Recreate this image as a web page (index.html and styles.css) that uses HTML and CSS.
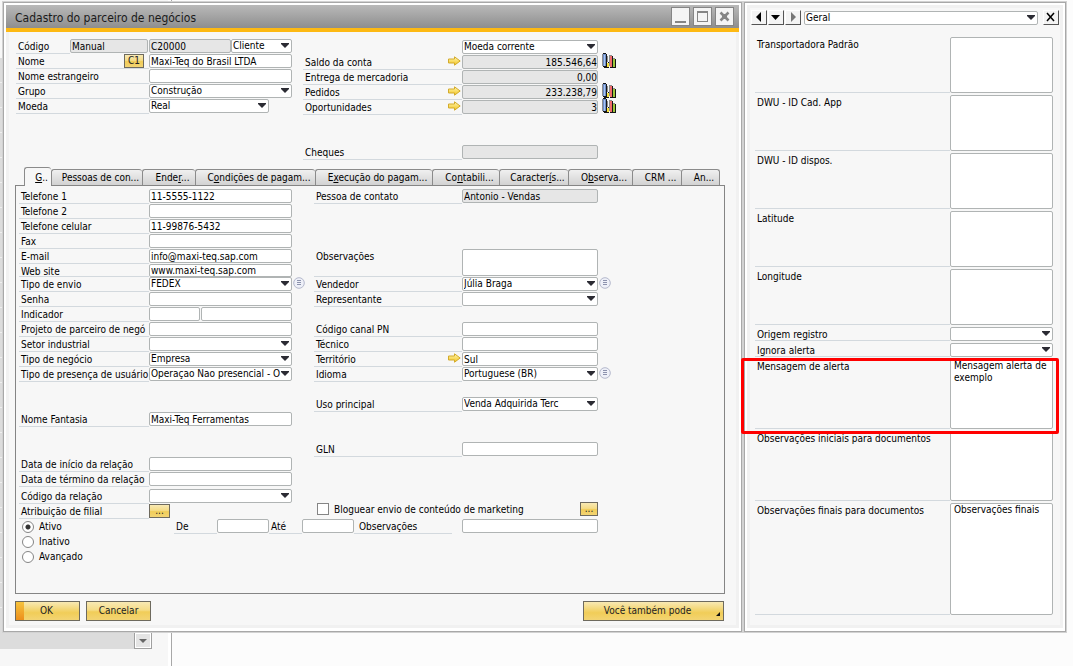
FILE: index.html
```html
<!DOCTYPE html>
<html lang="pt-BR">
<head>
    <meta charset="UTF-8">
    <meta name="viewport" content="width=device-width, initial-scale=1.0">
    <title>Cadastro do parceiro de negócios</title>
    <link rel="stylesheet" href="styles.css">
</head>
<body>

    <!-- Ícones reutilizados -->
    <svg class="sprites" width="0" height="0" aria-hidden="true">
        <defs>
            <linearGradient id="gold" x1="0" y1="0" x2="0" y2="1">
                <stop offset="0" stop-color="#fff6b0"/>
                <stop offset="1" stop-color="#f2c420"/>
            </linearGradient>
            <symbol id="arrow" viewBox="0 0 13 10">
                <path d="M.5 3h6V.8L12.2 5 6.5 9.2V7h-6z" fill="url(#gold)" stroke="#d3ab2c"/>
            </symbol>
            <symbol id="chart" viewBox="0 0 14 15">
                <path d="M0 1h1v12H0zM5 3h1v6H5zM7 2h3v1H7zM7 3h1v10H7zM11 5h2v1h-2z" fill="#8c8c8c"/>
                <path d="M1 0h3v1h1v14H2v-1H1zM6 9h1v6H5v-5h1zM10 3h1v12H8v-1h2zM13 6h1v9h-3v-1h2z" fill="#151515"/>
                <path d="M1 1h3v12H1z" fill="#6f8fc8"/>
                <path d="M2 2h1v11H2z" fill="#a9c4f2"/>
                <path d="M5 10h2v4H5z" fill="#f6e23c"/>
                <path d="M8 3h2v11H8z" fill="#f26d6d"/>
                <path d="M11 6h2v8h-2z" fill="#9cc83c"/>
            </symbol>
            <symbol id="list" viewBox="0 0 12 12">
                <circle cx="6" cy="6" r="5.3" fill="#eef0f8" stroke="#b4b8cc"/>
                <path d="M4 3h4v1H4zM4 5h4v1H4zM4 7h4v1H4z" fill="#8c92ad"/>
            </symbol>
        </defs>
    </svg>

    <div class="back-window">
        <div class="back-grid"></div>
        <div class="back-footer"><button type="button" class="back-drop" aria-label="Abrir lista"></button></div>
    </div>

    <div class="desktop">
        <main class="window main-window">
            <header class="titlebar">
                <h1>Cadastro do parceiro de negócios</h1>
                <button type="button" aria-label="Minimizar"><svg width="15" height="15" viewBox="0 0 15 15"><path d="M2 12h11v2H2z" fill="#858585"/></svg></button>
                <button type="button" aria-label="Maximizar"><svg width="15" height="15" viewBox="0 0 15 15"><path d="M2 2h11v11H2zM3 4v8h9V4z" fill="#858585" fill-rule="evenodd"/></svg></button>
                <button type="button" aria-label="Fechar"><svg width="15" height="15" viewBox="0 0 15 15"><path d="M3.500 3.500l8 8M11.500 3.500l-8 8" stroke="#858585" stroke-width="2.500"/><path d="M5 5h5v5H5z" fill="#858585"/></svg></button>
            </header>

            <form class="content">
                <div class="header">
                    <div class="header-left">
                        <div class="field">
                            <label class="short" for="codigo">Código</label>
                            <input class="serie" type="text" value="Manual" aria-label="Série" readonly>
                            <input class="code" id="codigo" type="text" value="C20000" readonly>
                            <select class="kind" aria-label="Tipo"><option>Cliente</option></select>
                        </div>
                        <div class="field">
                            <label for="nome">Nome</label>
                            <button type="button" class="gold c1">C1</button>
                            <input id="nome" type="text" value="Maxi-Teq do Brasil LTDA">
                        </div>
                        <div class="field"><label for="estrangeiro">Nome estrangeiro</label><input id="estrangeiro" type="text"></div>
                        <div class="field"><label for="grupo">Grupo</label><select id="grupo"><option>Construção</option></select></div>
                        <div class="field"><label for="moeda">Moeda</label><select class="currency" id="moeda"><option>Real</option></select></div>
                    </div>

                    <div class="header-right">
                        <div class="field"><span class="no-label"></span><select aria-label="Moeda de exibição"><option>Moeda corrente</option></select></div>
                        <div class="field">
                            <label for="saldo">Saldo da conta<svg class="arrow"><use href="#arrow"/></svg></label>
                            <input id="saldo" type="text" value="185.546,64" readonly>
                            <svg class="chart"><use href="#chart"/></svg>
                        </div>
                        <div class="field"><label for="entrega">Entrega de mercadoria</label><input id="entrega" type="text" value="0,00" readonly></div>
                        <div class="field">
                            <label for="pedidos">Pedidos<svg class="arrow"><use href="#arrow"/></svg></label>
                            <input id="pedidos" type="text" value="233.238,79" readonly>
                            <svg class="chart"><use href="#chart"/></svg>
                        </div>
                        <div class="field">
                            <label for="oport">Oportunidades<svg class="arrow"><use href="#arrow"/></svg></label>
                            <input id="oport" type="text" value="3" readonly>
                            <svg class="chart"><use href="#chart"/></svg>
                        </div>
                        <div class="field space-2"><label for="cheques">Cheques</label><input id="cheques" type="text" readonly></div>
                    </div>
                </div>

                <nav class="tabs">
                    <button type="button" class="tab-1 active"><u>G</u>..</button>
                    <button type="button" class="tab-2">Pessoas de con...</button>
                    <button type="button" class="tab-3">Ende<u>r</u>...</button>
                    <button type="button" class="tab-4">C<u>o</u>ndições de pagam...</button>
                    <button type="button" class="tab-5">E<u>x</u>ecução do pagam...</button>
                    <button type="button" class="tab-6">Co<u>n</u>tabili...</button>
                    <button type="button" class="tab-7">Caracter<u>í</u>s...</button>
                    <button type="button" class="tab-8">O<u>b</u>serva...</button>
                    <button type="button" class="tab-9">CRM ...</button>
                    <button type="button" class="tab-10">An...</button>
                </nav>

                <section class="panel">
                    <div class="columns">
                        <div class="col-left">
                            <div class="field"><label for="tel1">Telefone 1</label><input id="tel1" type="text" value="11-5555-1122"></div>
                            <div class="field"><label for="tel2">Telefone 2</label><input id="tel2" type="text"></div>
                            <div class="field"><label for="cel">Telefone celular</label><input id="cel" type="text" value="11-99876-5432"></div>
                            <div class="field"><label for="fax">Fax</label><input id="fax" type="text"></div>
                            <div class="field"><label for="email">E-mail</label><input id="email" type="text" value="info@maxi-teq.sap.com"></div>
                            <div class="field low"><label for="site">Web site</label><input id="site" type="text" value="www.maxi-teq.sap.com"></div>
                            <div class="field">
                                <label for="envio">Tipo de envio</label><select id="envio"><option>FEDEX</option></select>
                                <svg class="list"><use href="#list"/></svg>
                            </div>
                            <div class="field"><label for="senha">Senha</label><input id="senha" type="text"></div>
                            <div class="field">
                                <label for="indicador">Indicador</label>
                                <input class="ind-code" id="indicador" type="text">
                                <input class="ind-name" type="text" aria-label="Nome do indicador">
                            </div>
                            <div class="field"><label for="projeto">Projeto de parceiro de negó</label><input id="projeto" type="text"></div>
                            <div class="field"><label for="setor">Setor industrial</label><select id="setor"><option></option></select></div>
                            <div class="field"><label for="negocio">Tipo de negócio</label><select id="negocio"><option>Empresa</option></select></div>
                            <div class="field"><label for="presenca">Tipo de presença de usuário</label><select id="presenca"><option>Operaçao Nao presencial - O</option></select></div>
                            <div class="field space-2"><label for="fantasia">Nome Fantasia</label><input id="fantasia" type="text" value="Maxi-Teq Ferramentas"></div>
                            <div class="field space-2"><label for="inicio">Data de início da relação</label><input id="inicio" type="text"></div>
                            <div class="field"><label for="termino">Data de término da relação</label><input id="termino" type="text"></div>
                            <div class="field tall"><label for="relacao">Código da relação</label><select id="relacao"><option></option></select></div>
                            <div class="field"><label for="filial">Atribuição de filial</label><button type="button" class="gold dots" id="filial">...</button></div>
                        </div>

                        <div class="col-right">
                            <div class="field"><label for="contato">Pessoa de contato</label><input id="contato" type="text" value="Antonio - Vendas" readonly></div>
                            <div class="field space-3 double"><label for="obs">Observações</label><textarea id="obs"></textarea></div>
                            <div class="field">
                                <label for="vendedor">Vendedor</label><select id="vendedor"><option>Júlia Braga</option></select>
                                <svg class="list"><use href="#list"/></svg>
                            </div>
                            <div class="field"><label for="repr">Representante</label><select id="repr"><option></option></select></div>
                            <div class="field space-1"><label for="canal">Código canal PN</label><input id="canal" type="text"></div>
                            <div class="field"><label for="tecnico">Técnico</label><input id="tecnico" type="text"></div>
                            <div class="field">
                                <label for="territorio">Território<svg class="arrow"><use href="#arrow"/></svg></label>
                                <input id="territorio" type="text" value="Sul">
                            </div>
                            <div class="field">
                                <label for="idioma">Idioma</label><select id="idioma"><option>Portuguese (BR)</option></select>
                                <svg class="list"><use href="#list"/></svg>
                            </div>
                            <div class="field space-1"><label for="uso">Uso principal</label><select id="uso"><option>Venda Adquirida Terc</option></select></div>
                            <div class="field space-2"><label for="gln">GLN</label><input id="gln" type="text"></div>
                            <div class="field space-3 marketing">
                                <input type="checkbox" id="bloquear"><label for="bloquear">Bloguear envio de conteúdo de marketing</label>
                                <button type="button" class="gold" aria-label="Opções de marketing">...</button>
                            </div>
                        </div>
                    </div>

                    <div class="status">
                        <div class="radios">
                            <label><input type="radio" name="status" checked>Ativo</label>
                            <label><input type="radio" name="status">Inativo</label>
                            <label><input type="radio" name="status">Avançado</label>
                        </div>
                        <div class="field period">
                            <label class="de" for="de">De</label><input class="date" id="de" type="text">
                            <label class="ate" for="ate">Até</label><input class="date" id="ate" type="text">
                            <label class="notes" for="notas">Observações</label><input class="notes-input" id="notas" type="text">
                        </div>
                    </div>
                </section>

                <footer class="actions">
                    <button type="button" class="gold ok">OK</button>
                    <button type="button" class="gold">Cancelar</button>
                    <button type="button" class="gold more">Você também pode</button>
                </footer>
            </form>
        </main>

        <aside class="window side-window">
            <div class="side-content">
                <div class="toolbar">
                    <button type="button" aria-label="Anterior"><svg width="13" height="12"><path d="M9 1v10L4 6z"/></svg></button>
                    <button type="button" aria-label="Lista"><svg width="13" height="12"><path d="M2 4h9L6.500 9z"/></svg></button>
                    <button type="button" aria-label="Próximo" disabled><svg width="13" height="12"><path d="M5 1v10l5-5z"/></svg></button>
                    <select aria-label="Categoria"><option>Geral</option></select>
                    <button type="button" aria-label="Fechar painel"><svg width="13" height="12"><path d="M3 2l7 8M10 2l-7 8" stroke="#000" stroke-width="1.500"/></svg></button>
                </div>

                <div class="udf"><label for="transp">Transportadora Padrão</label><textarea id="transp"></textarea></div>
                <div class="udf"><label for="cad">DWU - ID Cad. App</label><textarea id="cad"></textarea></div>
                <div class="udf"><label for="dispos">DWU - ID dispos.</label><textarea id="dispos"></textarea></div>
                <div class="udf"><label for="lat">Latitude</label><textarea id="lat"></textarea></div>
                <div class="udf"><label for="lon">Longitude</label><textarea id="lon"></textarea></div>
                <div class="udf line"><label for="origem">Origem registro</label><select id="origem"><option></option></select></div>
                <div class="udf line"><label for="ignora">Ignora alerta</label><select id="ignora"><option></option></select></div>
                <div class="udf medium marked"><label for="msg">Mensagem de alerta</label><textarea id="msg">Mensagem alerta de exemplo</textarea></div>
                <div class="udf medium"><label for="iniciais">Observações iniciais para documentos</label><textarea id="iniciais"></textarea></div>
                <div class="udf large"><label for="finais">Observações finais para documentos</label><textarea id="finais">Observações finais</textarea></div>
            </div>
        </aside>
    </div>

</body>
</html>
```
FILE: styles.css
```css
* {
    box-sizing: border-box;
}

body {
    margin: 0;
    min-height: 100vh;
    position: relative;
    overflow: hidden;
    background-color: #fcfcfc;
    color: #000;
    font-family: "DejaVu Sans Condensed", "Liberation Sans", sans-serif;
    font-size: 10px;
    line-height: 14px;
}

.sprites {
    position: absolute;
}

/* Janela que fica atrás */
.back-window {
    position: absolute;
    top: 0;
    bottom: 0;
    left: 0;
    width: 172px;
    display: flex;
    flex-direction: column;
    padding-bottom: 17px;
    background-color: #f7f7f7;
    border-right: 1px solid #a8a8a8;
    box-shadow: inset -3px 0 #fff;
}

.back-grid {
    flex: 1;
    width: 134px;
    margin-top: 58px;
    background: repeating-linear-gradient(#dcdcdc 0 24px, #efefef 24px 25px);
}

.back-footer {
    width: 152px;
    height: 17px;
    display: flex;
    justify-content: flex-end;
    background-color: #dcdcdc;
}

.back-drop {
    width: 18px;
    padding: 0;
    border: 1px solid #a0a0a0;
    background: #e4e4e4 url("data:image/svg+xml,%3Csvg xmlns='http://www.w3.org/2000/svg' width='8' height='4'%3E%3Cpath d='M0 0h8L4 4z' fill='%23666'/%3E%3C/svg%3E") no-repeat center;
    box-shadow: inset 0 0 0 1px #fff;
}

/* Janelas */
.desktop {
    position: relative;
    display: flex;
    align-items: stretch;
    gap: 2px;
    padding: 2px 7px 0 3px;
}

.window {
    padding: 2px 2px 3px;
    background-color: #fff;
    border: 1px solid #a8a8a8;
    box-shadow: 0 0 0 1px #d2d2d2;
}

.main-window {
    flex: 1;
}

.titlebar {
    display: flex;
    align-items: center;
    gap: 3px;
    height: 27px;
    padding: 0 5px 0 9px;
    background: linear-gradient(#b9b9b9, #8e8e8e);
    border-bottom: 4px solid #fdb913;
}

.titlebar h1 {
    flex: 1;
    margin: 0;
    font-size: 12px;
    line-height: 18px;
    padding-top: 3px;
    font-weight: normal;
    color: #1a1a1a;
}

.titlebar button {
    display: flex;
    width: 19px;
    height: 19px;
    padding: 1px;
    border: 1px solid #858585;
    background-color: #f4f4f4;
}

.content {
    padding: 7px 11px 4px 6px;
    background-color: #f7f7f7;
    border: solid #f1f1f1;
    border-width: 0 3px 3px;
}

/* Campos */
input,
select,
textarea {
    margin: 0;
    font: inherit;
    line-height: 12px;
    color: #000;
    background-color: #fff;
    border: 1px solid #b0b4b4;
    border-radius: 2px;
}

input[type="text"],
select {
    width: 143px;
    height: 14px;
    padding: 0 1px;
}

input[readonly] {
    background-color: #e6e6e6;
}

select {
    appearance: none;
    background: #fff url("data:image/svg+xml,%3Csvg xmlns='http://www.w3.org/2000/svg' width='8' height='5'%3E%3Cpath d='M0 0h8v1L4 5 0 1z' fill='%232b2b33'/%3E%3C/svg%3E") no-repeat right 2px top 3px;
}

textarea {
    display: block;
    padding: 0 3px;
    resize: none;
    overflow: hidden;
}

button {
    font: inherit;
    color: #222;
}

.field {
    display: flex;
    align-items: flex-start;
    height: 15px;
}

.field label,
.no-label {
    flex: none;
    position: relative;
    width: 130px;
    height: 15px;
    padding: 1px 0 0 2px;
    white-space: nowrap;
    border-bottom: 1px solid #d3d9de;
}

.field .no-label {
    border-bottom: 0;
}

.field.low,
.field.low label,
.field.low input {
    height: 13px;
}

.field.tall {
    height: 17px;
    padding-top: 2px;
}

.space-1 {
    margin-top: 15px;
}

.space-2 {
    margin-top: 30px;
}

.space-3 {
    margin-top: 45px;
}

.arrow {
    position: absolute;
    right: 1px;
    top: 1px;
    width: 13px;
    height: 10px;
}

.chart {
    flex: none;
    width: 14px;
    height: 15px;
    margin: -2px 0 0 4px;
}

.list {
    flex: none;
    width: 12px;
    height: 12px;
    margin-left: 1px;
}

/* Botões amarelos */
.gold {
    padding: 0;
    border: 1px solid #6e6a5e;
    background: linear-gradient(#f8e9b4 0%, #f5dc86 45%, #f1cd58 55%, #f3d473 100%);
}

.header {
    display: flex;
    gap: 11px;
    padding: 0 1px;
}

.header-left {
    width: 276px;
}

.header-left .field label {
    width: 133px;
}

.header-left .field .short {
    width: 54px;
}

.header-left .serie {
    width: 78px;
    margin-right: 1px;
}

.header-left .code {
    width: 82px;
}

.header-left .kind {
    width: 61px;
}

.header-left .currency {
    width: 120px;
}

.header-left .c1 {
    position: relative;
    width: 20px;
    height: 14px;
    margin: 0 5px 0 -25px;
    line-height: 12px;
}

.header-right {
    padding-top: 1px;
}

.header-right .field label,
.header-right .no-label {
    width: 159px;
}

.header-right input,
.header-right select {
    width: 136px;
}

.header-right input {
    padding: 0;
    text-align: right;
}

/* Abas */
.tabs {
    display: flex;
    align-items: flex-end;
    height: 18px;
    margin-top: 7px;
    padding-left: 9px;
}

.tabs button {
    height: 16px;
    padding: 0 0 0 7px;
    border: 1px solid #8b8b8b;
    border-width: 1px 0 0 1px;
    border-radius: 3px 3px 0 0;
    background: linear-gradient(#f0f0f0, #d2d2d2);
    color: #000;
    text-align: center;
    white-space: nowrap;
}

.tabs button:last-child {
    border-right-width: 1px;
}

.tabs .active {
    position: relative;
    height: 19px;
    margin-bottom: -1px;
    padding-top: 2px;
    background: #f7f7f7;
}

.tab-1 { width: 27px; }
.tab-2 { width: 91px; }
.tab-3 { width: 53px; }
.tab-4 { width: 120px; }
.tab-5 { width: 117px; }
.tab-6 { width: 67px; }
.tab-7 { width: 69px; }
.tab-8 { width: 64px; }
.tab-9 { width: 49px; }
.tab-10 { width: 39px; }

.panel {
    padding: 3px 3px 29px;
    border: 1px solid #858585;
}

.columns {
    display: flex;
}

.col-left {
    width: 295px;
}

.col-left .ind-code {
    width: 51px;
    margin-right: 1px;
}

.col-left .ind-name {
    width: 91px;
}

.dots {
    width: 21px;
    height: 14px;
    line-height: 8px;
}

.col-right label {
    width: 148px;
}

.col-right input[type="text"],
.col-right select,
.col-right textarea {
    width: 136px;
}

.double,
.double label {
    height: 28px;
}

.double textarea {
    height: 27px;
}

.marketing input {
    appearance: none;
    flex: none;
    width: 12px;
    height: 12px;
    margin: 1px 3px 0 3px;
    border: 1px solid #858585;
    border-radius: 0;
}

.col-right .marketing label {
    width: 248px;
    border-bottom: 0;
}

.marketing .gold {
    width: 18px;
    height: 14px;
    line-height: 8px;
}

.status {
    display: flex;
}

.radios {
    width: 155px;
}

.radios label {
    display: flex;
    align-items: center;
    gap: 5px;
    height: 15px;
    padding-left: 3px;
}

.radios input {
    appearance: none;
    width: 12px;
    height: 12px;
    border: 1px solid #858585;
    border-radius: 50%;
}

.radios input:checked {
    background: radial-gradient(circle, #333 0 2px, #fff 3px);
}

.period .de {
    width: 43px;
}

.period .date {
    width: 52px;
}

.period .ate {
    width: 33px;
}

.period .notes {
    width: 98px;
    margin-right: 10px;
    padding-left: 5px;
}

.period .notes-input {
    width: 136px;
}

.actions {
    display: flex;
    gap: 6px;
    margin-top: 7px;
    padding-right: 1px;
}

.actions button {
    width: 65px;
    height: 20px;
}

.actions .ok {
    padding-right: 2px;
    background: linear-gradient(#f7c33c, #ec8f1c) no-repeat left / 8px 100%, linear-gradient(#f8e9b4, #f1cd58 60%, #f3d473);
}

.actions .more {
    width: 141px;
    margin-left: auto;
    padding-right: 12px;
    background: url("data:image/svg+xml,%3Csvg xmlns='http://www.w3.org/2000/svg' width='4' height='4'%3E%3Cpath d='M4 0v4H0z' fill='%23111'/%3E%3C/svg%3E") no-repeat right 3px bottom 4px, linear-gradient(#f8e9b4, #f1cd58 60%, #f3d473);
}

/* Painel lateral */
.side-window {
    width: 322px;
}

.side-content {
    height: 100%;
    padding: 2px 7px 0 5px;
    background-color: #f7f7f7;
    border: 3px solid #f1f1f1;
}

.toolbar {
    display: flex;
    align-items: center;
    gap: 1px;
    margin: 0 -6px 12px -4px;
}

.toolbar button {
    display: flex;
    flex: none;
    width: 16px;
    height: 15px;
    padding: 0;
    border: 1px solid #fff;
    border-right-color: #555;
    border-bottom-color: #555;
    background-color: #f4f4f4;
}

.toolbar button:disabled {
    fill: #777;
}

.toolbar select {
    flex: 1;
    margin: 0 4px 0 2px;
}

.udf {
    display: flex;
    height: 56px;
    margin-bottom: 2px;
}

.udf label {
    flex: 1;
    padding: 1px 0 0 2px;
    border-bottom: 1px solid #d3d9de;
}

.udf textarea,
.udf select {
    width: 103px;
}

.udf.line {
    height: 14px;
}

.udf.medium {
    height: 70px;
}

.udf.large {
    height: 112px;
}

/* Destaque em volta da mensagem de alerta */
.marked {
    position: relative;
}

.marked::after {
    content: "";
    position: absolute;
    top: -1px;
    right: -6px;
    bottom: -5px;
    left: -14px;
    border: 3px solid #f00;
    border-radius: 2px;
    pointer-events: none;
}
```
